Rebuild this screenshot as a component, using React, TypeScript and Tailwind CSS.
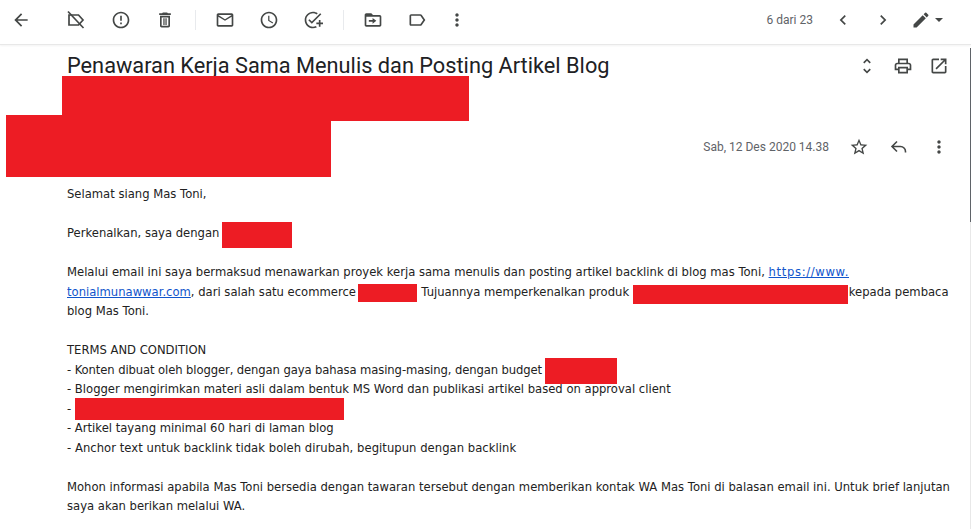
const bodyFont = "font-['DejaVu_Sans',sans-serif]";

function Icon({ d, size = 20, className = "" }: { d: string; size?: number; className?: string }) {
  return (
    <svg width={size} height={size} viewBox="0 0 24 24" fill="currentColor" className={className}>
      <path d={d} />
    </svg>
  );
}

const paths = {
  back: "M20 11H7.83l5.59-5.59L12 4l-8 8 8 8 1.41-1.41L7.83 13H20v-2z",
  report: "M11 15h2v2h-2zm0-8h2v6h-2zm.99-5C6.47 2 2 6.48 2 12s4.47 10 9.99 10C17.52 22 22 17.52 22 12S17.52 2 11.99 2zM12 20c-4.42 0-8-3.58-8-8s3.58-8 8-8 8 3.58 8 8-3.58 8-8 8z",
  trash: "M16 9v10H8V9h8m-1.5-6h-5l-1 1H5v2h14V4h-3.5l-1-1zM18 7H6v12c0 1.1.9 2 2 2h8c1.1 0 2-.9 2-2V7zM10 10h1.5v8H10zM12.5 10H14v8h-1.5z",
  mail: "M20 4H4c-1.1 0-1.99.9-1.99 2L2 18c0 1.1.9 2 2 2h16c1.1 0 2-.9 2-2V6c0-1.1-.9-2-2-2zm0 14H4V8l8 5 8-5v10zm-8-7L4 6h16l-8 5z",
  clock: "M11.99 2C6.47 2 2 6.48 2 12s4.47 10 9.99 10C17.52 22 22 17.52 22 12S17.52 2 11.99 2zM12 20c-4.42 0-8-3.58-8-8s3.58-8 8-8 8 3.58 8 8-3.58 8-8 8zm.5-13H11v6l5.25 3.15.75-1.23-4.5-2.67z",
  addTask: "M22 5.18L10.59 16.6l-4.24-4.24 1.41-1.41 2.83 2.83 10-10L22 5.18zM12 20c-4.41 0-8-3.59-8-8s3.59-8 8-8c1.57 0 3.04.46 4.28 1.25l1.45-1.45C16.1 2.67 14.13 2 12 2 6.48 2 2 6.48 2 12s4.48 10 10 10c1.73 0 3.36-.44 4.78-1.22l-1.5-1.5c-1 .46-2.11.72-3.28.72zm7-5h-3v2h3v3h2v-3h3v-2h-3v-3h-2v3z",
  folder: "M20 6h-8l-2-2H4c-1.1 0-2 .9-2 2v12c0 1.1.9 2 2 2h16c1.1 0 2-.9 2-2V8c0-1.1-.9-2-2-2zm0 12H4V8h16v10zM11.5 14H7v-2h4.5V9.5L16 13l-4.5 3.5z",
  label: "M17.63 5.84C17.27 5.33 16.67 5 16 5L5 5.01C3.9 5.01 3 5.9 3 7v10c0 1.1.9 1.99 2 1.99L16 19c.67 0 1.27-.33 1.63-.84L22 12l-4.37-6.16zM16 17H5V7h11l3.55 5L16 17z",
  more: "M12 8c1.1 0 2-.9 2-2s-.9-2-2-2-2 .9-2 2 .9 2 2 2zm0 2c-1.1 0-2 .9-2 2s.9 2 2 2 2-.9 2-2-.9-2-2-2zm0 6c-1.1 0-2 .9-2 2s.9 2 2 2 2-.9 2-2-.9-2-2-2z",
  left: "M15.41 7.41L14 6l-6 6 6 6 1.41-1.41L10.83 12z",
  right: "M10 6L8.59 7.41 13.17 12l-4.58 4.59L10 18l6-6z",
  pencil: "M3 17.25V21h3.75L17.81 9.94l-3.75-3.75L3 17.25zM20.71 7.04a1 1 0 0 0 0-1.41l-2.34-2.34a1 1 0 0 0-1.41 0l-1.83 1.83 3.75 3.75 1.83-1.83z",
  expand: "M12 5.83 15.17 9l1.41-1.41L12 3 7.41 7.59 8.83 9 12 5.83zm0 12.34L8.83 15l-1.41 1.41L12 21l4.59-4.59L15.17 15 12 18.17z",
  print: "M19 8h-1V3H6v5H5c-1.66 0-3 1.34-3 3v6h4v4h12v-4h4v-6c0-1.66-1.34-3-3-3zM8 5h8v3H8V5zm8 12v2H8v-4h8v2zm2-2v-2H6v2H4v-4c0-.55.45-1 1-1h14c.55 0 1 .45 1 1v4h-2z",
  open: "M19 19H5V5h7V3H5c-1.11 0-2 .9-2 2v14c0 1.1.89 2 2 2h14c1.1 0 2-.9 2-2v-7h-2v7zM14 3v2h3.59l-9.83 9.83 1.41 1.41L19 6.41V10h2V3h-7z",
  star: "M22 9.24l-7.19-.62L12 2 9.19 8.63 2 9.24l5.46 4.73L5.82 21 12 17.27 18.18 21l-1.63-7.03L22 9.24zM12 15.4l-3.76 2.27 1-4.28-3.32-2.88 4.38-.38L12 6.1l1.71 4.04 4.38.38-3.32 2.88 1 4.28L12 15.4z",
};

function Divider() {
  return <div className="mx-[7.5px] h-5 w-px bg-[#e8eaed]" />;
}

function IconSlot({ children, className = "" }: { children: React.ReactNode; className?: string }) {
  return <div className={`flex w-[44px] items-center justify-center text-[#444746] ${className}`}>{children}</div>;
}

function Toolbar() {
  return (
    <div className="flex h-[45px] items-center border-b border-[#e8e8e8] pb-[4px] shadow-[0_1px_2px_rgba(0,0,0,0.05)]">
      <IconSlot className="-ml-px"><Icon d={paths.back} /></IconSlot>
      <div className="w-[11px]" />
      <IconSlot>
        <svg width="20" height="20" viewBox="0 0 20 20" fill="none" stroke="currentColor" strokeWidth="1.7">
          <path d="M3 5v10h9.5L17 10l-4.5-5H3z" />
          <path d="M2 1.5 17.5 18" />
        </svg>
      </IconSlot>
      <IconSlot className="ml-px"><Icon d={paths.report} /></IconSlot>
      <IconSlot><Icon d={paths.trash} /></IconSlot>
      <Divider />
      <IconSlot><Icon d={paths.mail} /></IconSlot>
      <IconSlot><Icon d={paths.clock} /></IconSlot>
      <IconSlot><Icon d={paths.addTask} /></IconSlot>
      <Divider />
      <IconSlot><Icon d={paths.folder} /></IconSlot>
      <IconSlot><Icon d={paths.label} /></IconSlot>
      <IconSlot className="-ml-[4px]"><Icon d={paths.more} /></IconSlot>
      <div className="ml-auto flex items-center text-[#444746]">
        <span className="mr-[20px] font-['Roboto',sans-serif] text-[12px] text-[#5f6368]">6 dari 23</span>
        <Icon d={paths.left} />
        <Icon d={paths.right} className="ml-[20px]" />
        <Icon d={paths.pencil} className="ml-[18px]" />
        <span className="ml-[4px] mr-[28px] h-0 w-0 border-x-[4px] border-t-[4px] border-x-transparent border-t-[#444746]" />
      </div>
    </div>
  );
}

function Redact({ className }: { className: string }) {
  return <div className={`absolute bg-[#ed1c24] ${className}`} />;
}

export default function App() {
  return (
    <div className="relative h-[529px] w-[971px] overflow-hidden bg-white">
      <Toolbar />
      <div className="absolute right-0 top-[48px] h-[481px] w-px bg-[#e8e8e8]" />
      <div className="absolute right-0 top-[48px] h-[174px] w-px bg-[#5f6368]" />

      <div className="flex items-start pl-[67px] pr-[22px] pt-[6px]">
        <h1 className="font-['Roboto',sans-serif] text-[21.75px] leading-[30px] text-[#202124]">
          Penawaran Kerja Sama Menulis dan Posting Artikel Blog
        </h1>
        <div className="ml-auto flex items-center gap-[16px] pt-[5px] text-[#444746]">
          <Icon d={paths.expand} />
          <Icon d={paths.print} />
          <Icon d={paths.open} />
        </div>
      </div>

      <div className="flex items-center justify-end pr-[22px] pt-[56px]">
        <span className="mr-[20px] font-['Roboto',sans-serif] text-[12px] text-[#5f6368]">Sab, 12 Des 2020 14.38</span>
        <Icon d={paths.star} className="mr-[20px] text-[#444746]" />
        <svg width="20" height="20" viewBox="0 0 20 20" fill="none" stroke="currentColor" strokeWidth="1.6" className="mr-[20px] text-[#444746]">
          <path d="M8 4.5 3 9.5l5 5M3 9.5h8.5a5 5 0 0 1 5 5v1" />
        </svg>
        <Icon d={paths.more} className="text-[#444746]" />
      </div>

      <div className={`pl-[67px] pr-[20px] pt-[28px] text-[11.6px] leading-[19.5px] text-[#222222] ${bodyFont}`}>
        <p>Selamat siang Mas Toni,</p>
        <p className="mt-[19.5px]">Perkenalkan, saya dengan</p>
        <p className="mt-[19.5px]">
          Melalui email ini saya bermaksud menawarkan proyek kerja sama menulis dan posting artikel backlink di blog mas Toni,{" "}
          <a className="text-[#1155cc] underline tracking-[0.65px]">https://www.</a>
          <br />
          <a className="text-[#1155cc] underline">tonialmunawwar.com</a>, dari salah satu ecommerce <span className="inline-block w-[58px]" /> Tujuannya memperkenalkan produk <span className="inline-block w-[216px]" />kepada pembaca blog Mas Toni.
        </p>
        <p className="mt-[19.5px]">TERMS AND CONDITION</p>
        <p className="tracking-[-0.1px]">- Konten dibuat oleh blogger, dengan gaya bahasa masing-masing, dengan budget</p>
        <p>- Blogger mengirimkan materi asli dalam bentuk MS Word dan publikasi artikel based on approval client</p>
        <p>-</p>
        <p>- Artikel tayang minimal 60 hari di laman blog</p>
        <p className="tracking-[0.04px]">- Anchor text untuk backlink tidak boleh dirubah, begitupun dengan backlink</p>
        <p className="mt-[19.5px]">
          Mohon informasi apabila Mas Toni bersedia dengan tawaran tersebut dengan memberikan kontak WA Mas Toni di balasan email ini. Untuk brief lanjutan saya akan berikan melalui WA.
        </p>
      </div>

      <Redact className="left-[62px] top-[76px] h-[45px] w-[407px]" />
      <Redact className="left-[6px] top-[115px] h-[62px] w-[325px]" />
      <Redact className="left-[222px] top-[222px] h-[26px] w-[70px]" />
      <Redact className="left-[358px] top-[284px] h-[18px] w-[59px]" />
      <Redact className="left-[633px] top-[285px] h-[19px] w-[215px]" />
      <Redact className="left-[545px] top-[358px] h-[26px] w-[72px]" />
      <Redact className="left-[75px] top-[398px] h-[22px] w-[269px]" />
    </div>
  );
}
